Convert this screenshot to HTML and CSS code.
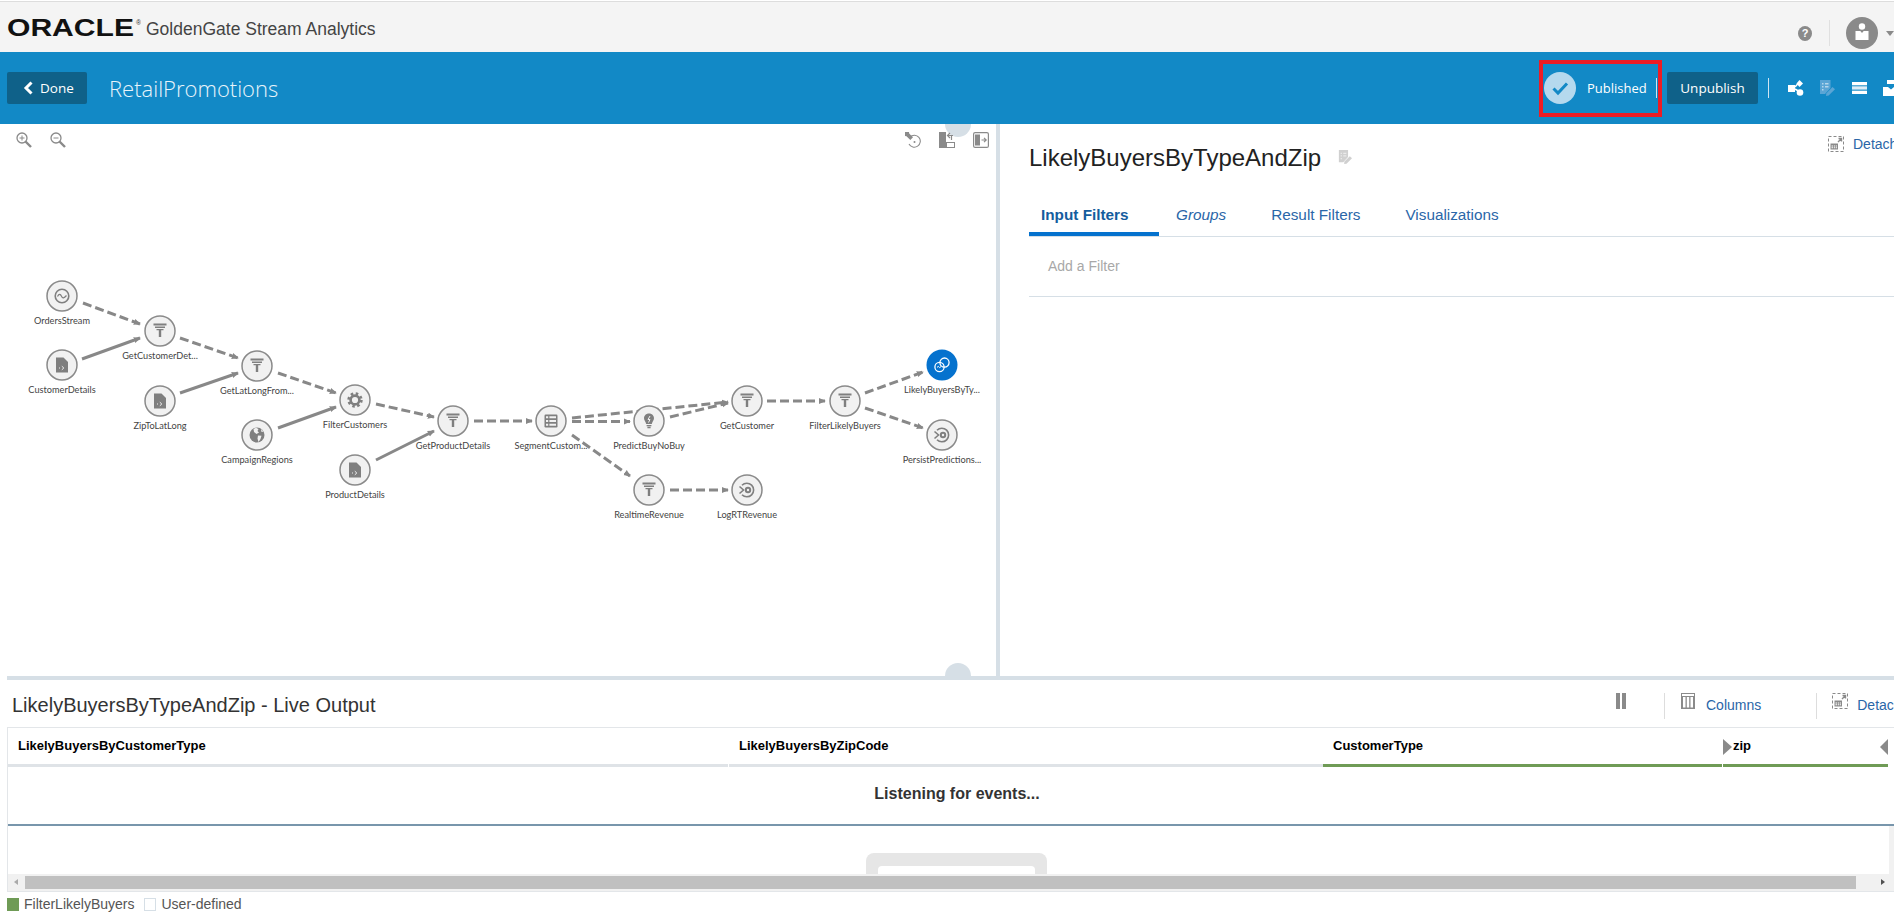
FILE: index.html
```html
<!DOCTYPE html>
<html lang="en">
<head>
<meta charset="utf-8">
<title>GoldenGate Stream Analytics</title>
<link rel="stylesheet" href="styles.css">
</head>
<body>
<svg class="defs" aria-hidden="true">
  <defs>
    <marker id="arrow" viewBox="0 0 8 8" refX="7" refY="4" markerWidth="7" markerHeight="7" markerUnits="userSpaceOnUse" orient="auto"><path d="M0 0.5L8 4L0 7.5z" fill="#888"/></marker>
    <symbol id="i-filter" viewBox="-10 -10 20 20" overflow="visible"><path fill="currentColor" d="M-6.5-7.5h13v2h-13zM-5-4.5h10v1.5H-5zM-3.5-2h7v1.2h-7zM-1.2-.8h2.400V6h-2.400z"/></symbol>
    <symbol id="i-file" viewBox="-10 -10 20 20" overflow="visible"><path fill="currentColor" d="M-6-7.5h7.500L6-3V7.500H-6z"/><path fill="none" stroke="#f1f1f1" stroke-width="1" d="M-.2 1.200L1.800 3L-.2 4.800M-3 3h1"/></symbol>
    <symbol id="i-stream" viewBox="-10 -10 20 20" overflow="visible"><circle r="6.800" fill="none" stroke="currentColor" stroke-width="1.600"/><path d="M-4.500 .5C-3 -2.500 -1.500 -2 -.5 .3S2 2.500 4.500 -.5" fill="none" stroke="currentColor" stroke-width="1.200"/></symbol>
    <symbol id="i-gear" viewBox="-10 -10 20 20" overflow="visible"><circle r="6.400" fill="none" stroke="currentColor" stroke-width="2.600" stroke-dasharray="2.510 2.510"/><circle r="4.400" fill="none" stroke="currentColor" stroke-width="2.600"/></symbol>
    <symbol id="i-globe" viewBox="-10 -10 20 20" overflow="visible"><circle r="7.500" fill="currentColor"/><path fill="#f1f1f1" d="M-1-7.200L1.500-6L.5-4L2-2.500L-.5-1L-3-3L-3.500-6zM1 .5L4.500 .8L3.500 4L1.500 7L.5 3.500zM4-6L6.500-3.500L4.500-3z"/></symbol>
    <symbol id="i-table" viewBox="-10 -10 20 20" overflow="visible"><rect x="-6.500" y="-6.500" width="13" height="13" rx="1.200" fill="currentColor"/><path fill="#f1f1f1" d="M-5-4.800h2.200v2H-5zM-1.600-4.800H5v2h-6.600zM-5-1h2.200v2H-5zM-1.600-1H5v2h-6.600zM-5 2.800h2.200v2H-5zM-1.600 2.800H5v2h-6.600z"/></symbol>
    <symbol id="i-bulb" viewBox="-10 -10 20 20" overflow="visible"><path fill="currentColor" d="M0-7.500C-3.200-7.500-5-5.200-5-2.800C-5-.5-3.200 .6-2.800 3H2.800C3.200 .6 5-.5 5-2.800C5-5.200 3.200-7.500 0-7.500zM-2.400 4h4.800v1.200h-4.800zM-1.600 5.800h3.200v1.400h-3.200z"/><path fill="none" stroke="#f1f1f1" d="M1-5L-1-1.500H1L-.5 1.500"/></symbol>
    <symbol id="i-target" viewBox="-10 -10 20 20" overflow="visible"><path fill="none" stroke="currentColor" stroke-width="1.600" d="M-5-4.800A6.800 6.800 0 1 1-5 4.800"/><path fill="none" stroke="currentColor" stroke-width="1.600" d="M-7.500-3.500L-3.500 0L-7.500 3.500"/><circle r="3.200" cx="1" fill="currentColor"/><circle r="1.200" cx="1" fill="#f1f1f1"/></symbol>
    <symbol id="i-link" viewBox="-10 -10 20 20" overflow="visible"><circle cx="-2.500" cy="2" r="4.600" fill="none" stroke="currentColor" stroke-width="1.300"/><circle cx="2.500" cy="-2.400" r="4.600" fill="none" stroke="currentColor" stroke-width="1.300"/><path d="M-5 2.400l1.300-1l1.300 1.200l1.400-1" fill="none" stroke="currentColor"/></symbol>
    <symbol id="i-detach" viewBox="0 0 16 16"><rect x=".5" y=".5" width="15" height="15" fill="none" stroke="#8a8a8a" stroke-dasharray="3 2"/><path fill="#8a8a8a" d="M2.500 7.500h7.500v6H2.500z"/><path fill="#fff" d="M3.500 9.500h1.500v1H3.500zM5.800 9.500h1.500v1H5.800zM8 9.500h1v1H8zM3.500 11.300h1.500v1H3.500zM5.800 11.300h1.500v1H5.800zM8 11.300h1v1H8z"/><path fill="none" stroke="#8a8a8a" stroke-width="1.400" d="M10 6l3.500-3.500M10.500 2.500h3v3"/></symbol>
    <symbol id="i-edit" viewBox="0 0 16 16"><path fill="currentColor" d="M1 0h10.500v8L6 14H1z"/><path fill="#fff" opacity=".55" d="M3 3h1.500v1.500H3zM6 3h3.500v1.500H6zM3 6h1.500v1.500H3zM6 6h3.500v1.500H6zM3 9h1.500v1.500H3z"/><path fill="currentColor" d="M13.500 7L16 9.300L9.700 15.600L7 16L7.400 13.200z"/></symbol>
  </defs>
</svg>

<header class="top-bar">
  <div class="brand">
    <svg class="oracle" viewBox="0 0 134 26" width="134" height="26" role="img" aria-label="Oracle">
      <text class="oracle-word" x="0" y="21" textLength="127" lengthAdjust="spacingAndGlyphs">ORACLE</text>
      <text class="oracle-reg" x="129" y="10">®</text>
    </svg>
    <span class="product">GoldenGate Stream Analytics</span>
  </div>
  <div class="top-actions">
    <span class="help">?</span>
    <span class="top-sep"></span>
    <span class="avatar">
      <svg viewBox="0 0 32 32" width="32" height="32"><circle cx="16" cy="9.500" r="3.200" fill="#fff"/><path fill="#fff" d="M9.500 14h4.800l1.700 2l1.700-2h4.800v9h-13z"/></svg>
    </span>
    <span class="caret"></span>
  </div>
</header>

<div class="toolbar">
  <button class="btn-dark btn-done">
    <svg viewBox="0 0 12 14" width="12" height="14"><path d="M9.500 1.500L4 7l5.500 5.500" fill="none" stroke="#fff" stroke-width="3"/></svg>
    <span>Done</span>
  </button>
  <h1 class="app-title">RetailPromotions</h1>
  <div class="tb-right">
    <span class="status-circle">
      <svg viewBox="0 0 32 32" width="32" height="32"><path d="M9.500 16.500L14 21L23 11.500" fill="none" stroke="#1289c6" stroke-width="3"/></svg>
    </span>
    <span class="status-text">Published</span>
    <span class="tb-sep tb-sep-a"></span>
    <button class="btn-dark btn-unpublish">Unpublish</button>
    <span class="tb-sep tb-sep-b"></span>
    <svg class="tb-icon tb-share" viewBox="0 0 16 16" width="16" height="16"><rect x="0" y="5" width="7" height="7" fill="#fff"/><path d="M7 7L11 2.500M7 9L12 12" stroke="#fff" stroke-width="1.500"/><path d="M11.500 0L15 3.500L11.500 7L8.500 3.500z" fill="#fff"/><circle cx="12" cy="12.500" r="3.300" fill="#fff"/></svg>
    <svg class="tb-icon tb-edit" viewBox="0 0 16 16" width="16" height="16"><use href="#i-edit"/></svg>
    <svg class="tb-icon tb-rows" viewBox="0 0 15 12" width="15" height="12"><path fill="#fff" d="M0 0h15v3.300H0z"/><path fill="#dcecf6" d="M0 4.300h15v3.300H0z"/><path fill="#fff" d="M0 8.700h15V12H0z"/></svg>
    <svg class="tb-icon tb-last" viewBox="0 0 16 16" width="16" height="16"><path fill="#fff" d="M4 0h8v4H4zM0 7h5l3 2.500L11 7h5v9H0z"/></svg>
  </div>
  <div class="red-mark"></div>
</div>

<main class="panes">
  <section class="canvas-pane">
    <span class="handle handle-top"></span>
    <div class="canvas-tools">
      <div class="tool-group">
        <svg class="tool-icon" viewBox="0 0 16 16" width="16" height="16"><circle cx="6" cy="6" r="5" fill="none" stroke="#8a8a8a" stroke-width="1.300"/><path d="M3.500 6h5M6 3.500v5" stroke="#8a8a8a"/><path d="M9.500 9.500L15 15" stroke="#8a8a8a" stroke-width="2.400"/></svg>
        <svg class="tool-icon" viewBox="0 0 16 16" width="16" height="16"><circle cx="6" cy="6" r="5" fill="none" stroke="#8a8a8a" stroke-width="1.300"/><path d="M3.500 6h5" stroke="#8a8a8a"/><path d="M9.500 9.500L15 15" stroke="#8a8a8a" stroke-width="2.400"/></svg>
      </div>
      <div class="tool-group tool-group-right">
        <svg class="tool-icon" viewBox="0 0 16 16" width="16" height="16"><path d="M5 5A6 6 0 1 1 4 12" fill="none" stroke="#8a8a8a" stroke-width="1.100"/><circle cx="9.500" cy="10" r="1" fill="#8a8a8a"/><path d="M0 0h4l.2 1.500L8 5.300L5.300 8L1.500 4.200L0 4z" fill="#8a8a8a"/></svg>
        <svg class="tool-icon" viewBox="0 0 16 16" width="16" height="16"><path d="M0 0h7v16H0z" fill="#8a8a8a"/><rect x="7.500" y="10.500" width="8" height="5" fill="none" stroke="#8a8a8a"/><path d="M8.500 3.500H14M11 1L8.500 3.500L11 6M12.500 3.500V8" fill="none" stroke="#8a8a8a" stroke-width="1.200"/></svg>
        <svg class="tool-icon" viewBox="0 0 16 16" width="16" height="16"><rect x=".6" y=".6" width="14.800" height="14.800" rx="1.500" fill="none" stroke="#8a8a8a" stroke-width="1.200"/><rect x="2" y="2.500" width="5" height="11" fill="#8a8a8a"/><path d="M8.500 8H13M11 5.800L13.200 8L11 10.200" fill="none" stroke="#8a8a8a" stroke-width="1.200"/></svg>
      </div>
    </div>

    <svg class="graph" viewBox="7 124 989 552" width="989" height="552">
      <g class="edges">
        <path class="dash" d="M83 303L140 324"/>
        <path class="solid" d="M82 359L140 338"/>
        <path class="dash" d="M180 338L238 358"/>
        <path class="solid" d="M180 393L238 373"/>
        <path class="dash" d="M278 373L336 393"/>
        <path class="solid" d="M278 428L336 407"/>
        <path class="dash" d="M376 404L434 417"/>
        <path class="solid" d="M376 460L434 431"/>
        <path class="dash" d="M474 421H532"/>
        <path class="dash" d="M572 421.500H630"/>
        <path class="dash" d="M572 418L728 402"/>
        <path class="dash" d="M670 417L728 403"/>
        <path class="dash" d="M767 401H825"/>
        <path class="dash" d="M865 393L923 372"/>
        <path class="dash" d="M865 408L923 428"/>
        <path class="dash" d="M572 435L630 476"/>
        <path class="dash" d="M670 490H728"/>
      </g>
      <g class="node" transform="translate(62 296)"><circle r="15"/><use href="#i-stream" x="-10" y="-10" width="20" height="20"/><text y="26">OrdersStream</text></g>
      <g class="node" transform="translate(62 365)"><circle r="15"/><use href="#i-file" x="-10" y="-10" width="20" height="20"/><text y="26">CustomerDetails</text></g>
      <g class="node" transform="translate(160 331)"><circle r="15"/><use href="#i-filter" x="-10" y="-10" width="20" height="20"/><text y="26">GetCustomerDet...</text></g>
      <g class="node" transform="translate(160 401)"><circle r="15"/><use href="#i-file" x="-10" y="-10" width="20" height="20"/><text y="26">ZipToLatLong</text></g>
      <g class="node" transform="translate(257 366)"><circle r="15"/><use href="#i-filter" x="-10" y="-10" width="20" height="20"/><text y="26">GetLatLongFrom...</text></g>
      <g class="node" transform="translate(257 435)"><circle r="15"/><use href="#i-globe" x="-10" y="-10" width="20" height="20"/><text y="26">CampaignRegions</text></g>
      <g class="node" transform="translate(355 400)"><circle r="15"/><use href="#i-gear" x="-10" y="-10" width="20" height="20"/><text y="26">FilterCustomers</text></g>
      <g class="node" transform="translate(355 470)"><circle r="15"/><use href="#i-file" x="-10" y="-10" width="20" height="20"/><text y="26">ProductDetails</text></g>
      <g class="node" transform="translate(453 421)"><circle r="15"/><use href="#i-filter" x="-10" y="-10" width="20" height="20"/><text y="26">GetProductDetails</text></g>
      <g class="node" transform="translate(551 421)"><circle r="15"/><use href="#i-table" x="-10" y="-10" width="20" height="20"/><text y="26">SegmentCustom...</text></g>
      <g class="node" transform="translate(649 421)"><circle r="15"/><use href="#i-bulb" x="-10" y="-10" width="20" height="20"/><text y="26">PredictBuyNoBuy</text></g>
      <g class="node" transform="translate(747 401)"><circle r="15"/><use href="#i-filter" x="-10" y="-10" width="20" height="20"/><text y="26">GetCustomer</text></g>
      <g class="node" transform="translate(845 401)"><circle r="15"/><use href="#i-filter" x="-10" y="-10" width="20" height="20"/><text y="26">FilterLikelyBuyers</text></g>
      <g class="node node-active" transform="translate(942 365)"><circle r="15.500"/><use href="#i-link" x="-10" y="-10" width="20" height="20"/><text y="26">LikelyBuyersByTy...</text></g>
      <g class="node" transform="translate(942 435)"><circle r="15"/><use href="#i-target" x="-10" y="-10" width="20" height="20"/><text y="26">PersistPredictions...</text></g>
      <g class="node" transform="translate(649 490)"><circle r="15"/><use href="#i-filter" x="-10" y="-10" width="20" height="20"/><text y="26">RealtimeRevenue</text></g>
      <g class="node" transform="translate(747 490)"><circle r="15"/><use href="#i-target" x="-10" y="-10" width="20" height="20"/><text y="26">LogRTRevenue</text></g>
    </svg>
    <span class="handle handle-bottom"></span>
  </section>
  <div class="vsplit"></div>
  <section class="detail-pane">
    <div class="detail-head">
      <h2 class="detail-title">LikelyBuyersByTypeAndZip</h2>
      <svg class="detail-edit" viewBox="0 0 16 16" width="14" height="14"><use href="#i-edit"/></svg>
      <a class="detach detach-top"><svg viewBox="0 0 16 16" width="16" height="16"><use href="#i-detach"/></svg><span>Detach</span></a>
    </div>
    <nav class="tabs">
      <a class="tab tab-active">Input Filters</a>
      <a class="tab tab-italic">Groups</a>
      <a class="tab">Result Filters</a>
      <a class="tab">Visualizations</a>
    </nav>
    <div class="add-filter">Add a Filter</div>
  </section>
</main>

<div class="hsplit"></div>

<section class="output">
  <div class="output-head">
    <h3 class="output-title">LikelyBuyersByTypeAndZip - Live Output</h3>
    <div class="output-actions">
      <span class="pause"><i></i><i></i></span>
      <span class="out-sep"></span>
      <a class="columns-link">
        <svg viewBox="0 0 14 16" width="14" height="16"><path d="M0 0h14v16H0z" fill="#8a8a8a"/><path d="M1 1h12v2H1z" fill="#fff"/><path d="M2 4h2.500v10.500H2zM5.800 4h2.400v10.500H5.800zM9.500 4H12v10.500H9.500z" fill="#fff"/></svg>
        <span>Columns</span>
      </a>
      <span class="out-sep out-sep-b"></span>
      <a class="detach"><svg viewBox="0 0 16 16" width="16" height="16"><use href="#i-detach"/></svg><span>Detach</span></a>
    </div>
  </div>
  <div class="table">
    <div class="thead">
      <div class="th th-1">LikelyBuyersByCustomerType</div>
      <div class="th th-2">LikelyBuyersByZipCode</div>
      <div class="th th-3 th-green">CustomerType</div>
      <div class="th th-4 th-green"><span class="tri tri-r"></span>zip<span class="tri tri-l"></span></div>
    </div>
    <div class="listening">Listening for events...</div>
    <div class="tbody">
      <div class="ghost"><div class="ghost-inner"></div></div>
      <div class="vtrack"></div>
    </div>
    <div class="hscroll">
      <span class="arrow-l"></span>
      <span class="thumb"></span>
      <span class="arrow-r"></span>
    </div>
  </div>
  <div class="legend">
    <span class="swatch swatch-green"></span><span class="legend-text">FilterLikelyBuyers</span>
    <span class="swatch swatch-empty"></span><span class="legend-text">User-defined</span>
  </div>
</section>
</body>
</html>
```

FILE: styles.css
```css
* { box-sizing: border-box; }
html, body { margin: 0; height: 912px; overflow: hidden; background: #fff; }
body { width: 1894px; padding-top: 1px; font-family: "Liberation Sans", Arial, sans-serif; color: #333; }
.defs { position: absolute; width: 0; height: 0; }
h1, h2, h3 { margin: 0; font-weight: normal; }
button { border: 0; font: inherit; padding: 0; }

/* top bar */
.top-bar { height: 51px; border-top: 1px solid #ddd; background: #f4f4f4; display: flex; align-items: center; justify-content: space-between; padding-left: 7px; }
.brand { display: flex; align-items: center; }
.oracle { display: block; margin-top: 1px; }
.oracle-word { font: bold 23.500px "Liberation Sans", Arial, sans-serif; fill: #111; }
.oracle-reg { font: 7px "Liberation Sans", Arial, sans-serif; fill: #333; }
.product { margin: 4px 0 0 5px; font-size: 17.500px; color: #444; }
.top-actions { display: flex; align-items: center; width: 96px; flex: none; margin-top: 12px; }
.help { width: 15px; height: 15px; border-radius: 50%; background: #8a8a8a; color: #fff; font-size: 11px; font-weight: bold; line-height: 15px; text-align: center; }
.top-sep { width: 1px; height: 26px; background: #e0e0e0; margin-left: 17px; }
.avatar { width: 32px; height: 32px; border-radius: 50%; background: #8a8a8a; margin-left: 16px; display: block; }
.avatar svg { display: block; }
.caret { border: 4px solid transparent; border-top: 5px solid #8a8a8a; border-bottom: 0; margin-left: 8px; }

/* toolbar */
.toolbar { position: relative; height: 72px; background: #1289c6; display: flex; align-items: center; padding-left: 7px; }
.btn-dark { height: 32px; background: #0f6189; color: #fff; border-radius: 2px; font-family: "Open Sans", sans-serif; font-weight: 500; font-size: 13.500px; }
.btn-done { width: 80px; display: flex; align-items: center; padding-left: 15px; gap: 6px; flex: none; }
.app-title { flex: 1; margin-left: 22px; color: #e8f4fb; font-family: "Open Sans", sans-serif; font-weight: 300; font-size: 22px; }
.tb-right { flex: 0 0 350px; height: 32px; display: flex; align-items: center; overflow: hidden; }
.status-circle { width: 32px; height: 32px; border-radius: 50%; background: #b5d9ee; flex: none; }
.status-circle svg { display: block; }
.status-text { margin-left: 11px; width: 60px; flex: none; color: #fff; font-family: "Open Sans", sans-serif; font-weight: 500; font-size: 13px; white-space: nowrap; }
.tb-sep { width: 1px; height: 20px; background: #cfe5f2; flex: none; }
.tb-sep-a { margin-left: 9px; }
.btn-unpublish { width: 91px; margin-left: 10px; flex: none; }
.tb-sep-b { margin-left: 10px; }
.tb-icon { flex: none; display: block; }
.tb-share { margin-left: 19px; }
.tb-edit { margin-left: 15px; color: #5aa5d5; }
.tb-rows { margin-left: 17px; }
.tb-last { margin-left: 16px; }
.red-mark { position: absolute; left: 1539px; top: 8px; width: 123px; height: 57px; border: 4px solid #ed1c24; pointer-events: none; }

/* panes */
.panes { height: 552px; display: flex; padding-left: 7px; overflow: hidden; }
.canvas-pane { position: relative; flex: 0 0 989px; overflow: hidden; }
.canvas-tools { position: absolute; left: 9px; top: 8px; width: 973px; display: flex; justify-content: space-between; }
.tool-group { display: flex; gap: 18px; }
.tool-group-right { gap: 18px; }
.tool-icon { display: block; }
.graph { display: block; }
.handle { position: absolute; left: 938px; width: 26px; height: 26px; border-radius: 50%; background: #d6dfe6; }
.handle-top { top: -13px; }
.handle-bottom { bottom: -13px; }
.vsplit { flex: 0 0 4px; background: #d6dfe6; }
.detail-pane { flex: 1; min-width: 0; padding-left: 29px; }
.detail-head { height: 68px; display: flex; align-items: flex-start; }
.detail-title { margin-top: 19px; font-size: 24px; line-height: 30px; color: #222; }
.detail-edit { margin: 26px 0 0 17px; color: #d0d0d0; }
.detach { display: flex; align-items: center; color: #2a66a8; font-size: 14px; white-space: nowrap; }
.detach svg { display: block; }
.detach span { margin-left: 9px; }
.detach-top { margin: 10px -4px 0 auto; width: 70px; flex: none; padding-top: 2px; }
.tabs { height: 45px; display: flex; border-bottom: 1px solid #d6dfe6; font-size: 15.300px; color: #2a66a8; }
.tab { padding: 0 12px; line-height: 45px; margin-right: 21px; height: 44px; }
.tab-active { width: 130px; font-weight: bold; border-bottom: 4px solid #0572ce; padding-right: 0; margin-right: 5px; color: #145c9e; }
.tab-italic { font-style: italic; }
.add-filter { height: 60px; padding: 21px 0 0 19px; border-bottom: 1px solid #d6dfe6; color: #a8a8a8; font-size: 14px; }

/* edges and nodes */
.edges path { fill: none; stroke: #888; marker-end: url(#arrow); }
.dash { stroke-width: 3; stroke-dasharray: 9 4; }
.solid { stroke-width: 3; }
.node circle { fill: #f1f1f1; stroke: #8a8a8a; stroke-width: 1.500; }
.node use { color: #7f7f7f; }
.node text { font-family: Lato, sans-serif; font-size: 9.200px; fill: #444; text-anchor: middle; dominant-baseline: middle; }
.node-active circle { fill: #0572ce; stroke: none; }
.node-active use { color: #fff; }

/* output */
.hsplit { height: 4px; margin-left: 7px; background: #d6dfe6; }
.output { padding-left: 7px; }
.output-head { height: 47px; display: flex; }
.output-title { padding: 13px 0 0 5px; font-size: 20px; line-height: 24px; color: #333; flex: 0 0 600px; white-space: nowrap; }
.output-actions { position: relative; flex: 1; display: flex; align-items: flex-start; padding-top: 13px; padding-left: 1009px; white-space: nowrap; overflow: hidden; }
.pause { display: flex; gap: 2px; flex: none; }
.pause i { display: block; width: 4px; height: 16px; background: #8a8a8a; }
.out-sep { width: 1px; height: 26px; background: #ddd; margin-left: 38px; flex: none; }
.columns-link { display: flex; margin-left: 16px; color: #2a66a8; font-size: 14px; flex: none; }
.columns-link svg { display: block; }
.columns-link span { margin: 4px 0 0 11px; }
.out-sep-b { margin-left: 55px; }
.output-actions .detach { margin-left: 15px; align-items: flex-start; flex: none; }
.output-actions .detach span { margin: 4px 0 0 9px; }

.table { border-top: 1px solid #e3e6e9; border-left: 1px solid #e3e6e9; border-bottom: 1px solid #e3e6e9; height: 165px; overflow: hidden; display: flex; flex-direction: column; }
.thead { display: flex; height: 39px; flex: none; }
.th { position: relative; font-size: 13px; font-weight: bold; color: #000; line-height: 36px; border-bottom: 3px solid #dfe3e7; padding-left: 10px; flex: none; }
.th-1 { width: 720px; margin-right: 1px; }
.th-2 { width: 594px; }
.th-3 { width: 399px; margin-right: 1px; }
.th-4 { width: 165px; }
.th-green { border-bottom-color: #6f9b56; }
.tri { position: absolute; top: 11px; border: 8px solid transparent; }
.tri-r { left: 0; border-right: 0; border-left: 9px solid #8a8a8a; }
.tri-l { right: 0; border-left: 0; border-right: 8px solid #8a8a8a; }
.listening { height: 59px; flex: none; border-bottom: 2px solid #7896ac; font-size: 16px; font-weight: bold; color: #333; text-align: center; line-height: 54px; padding-left: 12px; }
.tbody { position: relative; flex: 1; overflow: hidden; }
.ghost { width: 181px; height: 60px; margin: 27px 0 0 858px; border-radius: 8px 8px 0 0; background: #e6e6e6; padding: 13px 12px 0; }
.ghost-inner { height: 40px; background: #fff; border-radius: 4px 4px 0 0; }
.vtrack { position: absolute; right: 0; top: 0; bottom: 0; width: 5px; background: #f1f1f1; }
.hscroll { position: relative; height: 17px; flex: none; background: #f1f1f1; }
.thumb { position: absolute; left: 17px; right: 38px; top: 2px; height: 13px; background: #c0c0c0; }
.arrow-l { position: absolute; left: 6px; top: 5px; border: 3.500px solid transparent; border-left: 0; border-right: 4px solid #aaa; }
.arrow-r { position: absolute; right: 9px; top: 5px; border: 3.500px solid transparent; border-right: 0; border-left: 4px solid #505050; }
.legend { height: 20px; padding-top: 4px; display: flex; align-items: center; font-size: 14px; color: #555; }
.swatch { width: 12px; height: 13px; flex: none; }
.swatch-green { background: #6f9b56; }
.swatch-empty { background: #fff; border: 1px solid #d6dfe6; margin-left: 10px; }
.legend-text { margin-left: 5px; }
```
